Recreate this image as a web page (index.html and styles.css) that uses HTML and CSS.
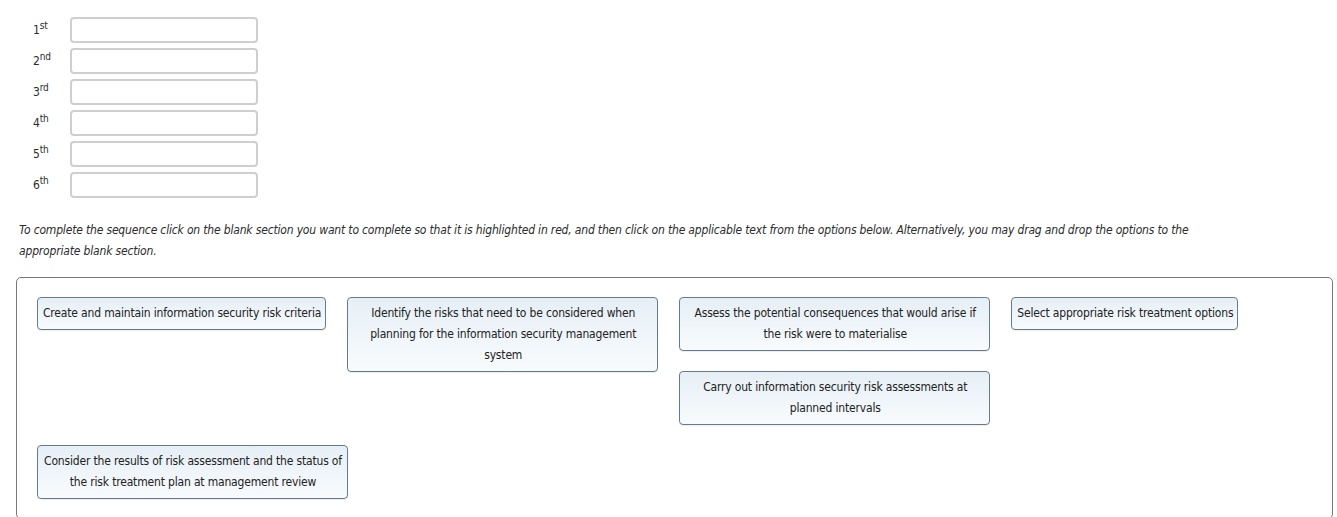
FILE: index.html
```html
<!DOCTYPE html>
<html>
  <head>
    <title>Sequence question</title>
    <link rel="stylesheet" href="styles.css">
  </head>
  <body>
    <div class="sequence">
      <div class="seq-row"><span class="seq-label">1<sup>st</sup></span><div class="seq-blank"></div></div>
      <div class="seq-row"><span class="seq-label">2<sup>nd</sup></span><div class="seq-blank"></div></div>
      <div class="seq-row"><span class="seq-label">3<sup>rd</sup></span><div class="seq-blank"></div></div>
      <div class="seq-row"><span class="seq-label">4<sup>th</sup></span><div class="seq-blank"></div></div>
      <div class="seq-row"><span class="seq-label">5<sup>th</sup></span><div class="seq-blank"></div></div>
      <div class="seq-row"><span class="seq-label">6<sup>th</sup></span><div class="seq-blank"></div></div>
    </div>

    <p class="instructions">
      To complete the sequence click on the blank section you want to complete so that it is highlighted in red, and then click on the applicable text from the options below. Alternatively, you may drag and drop the options to the appropriate blank section.
    </p>

    <div class="options">
      <div class="options-row">
        <div class="option-col">
          <div class="option">Create and maintain information security risk criteria</div>
        </div>
        <div class="option-col">
          <div class="option wide">Identify the risks that need to be considered when planning for the information security management system</div>
        </div>
        <div class="option-col">
          <div class="option wide">Assess the potential consequences that would arise if the risk were to materialise</div>
          <div class="option wide">Carry out information security risk assessments at planned intervals</div>
        </div>
        <div class="option-col">
          <div class="option">Select appropriate risk treatment options</div>
        </div>
      </div>
      <div class="options-row">
        <div class="option-col">
          <div class="option wide">Consider the results of risk assessment and the status of the risk treatment plan at management review</div>
        </div>
      </div>
    </div>
  </body>
</html>
```

FILE: styles.css
```css
body {
  font-family: "DejaVu Sans Condensed", "DejaVu Sans", sans-serif;
  font-size: 12px;
  letter-spacing: -0.17px;
  color: #2b2b2b;
  background-color: #fff;
  margin: 0;
  padding: 0;
}

.sequence {
  display: flex;
  flex-direction: column;
  gap: 5px;
  padding: 17px 0 0 33px;
}

.seq-row {
  display: flex;
  align-items: flex-start;
}

.seq-label {
  width: 37px;
  padding-top: 6px;
  line-height: 14px;
}

.seq-label sup {
  font-size: 10px;
  line-height: 0;
}

.seq-blank {
  width: 184px;
  height: 22px;
  border: 2px solid #cfcfcf;
  border-radius: 4px;
  background-color: #fff;
}

.instructions {
  font-style: italic;
  line-height: 21px;
  margin: 22px 0 0 19px;
  max-width: 1200px;
}

.options {
  margin: 15px 0 0 16px;
  width: 1275px;
  padding: 19px 20px;
  border: 1px solid #777;
  border-radius: 5px;
}

.options-row {
  display: flex;
  align-items: flex-start;
  gap: 21px;
}

.options-row + .options-row {
  margin-top: 20px;
}

.option-col {
  display: flex;
  flex-direction: column;
  gap: 20px;
}

.option {
  max-width: 300px;
  padding: 5px 4px 5px 5px;
  line-height: 21px;
  text-align: center;
  color: #222;
  border: 1px solid #657b8f;
  border-radius: 4px;
  background: linear-gradient(#e6eff6, #f8fbfd);
  box-shadow: 0 1px 1px rgba(0, 0, 0, 0.08);
}

.option.wide {
  width: 300px;
}
```
